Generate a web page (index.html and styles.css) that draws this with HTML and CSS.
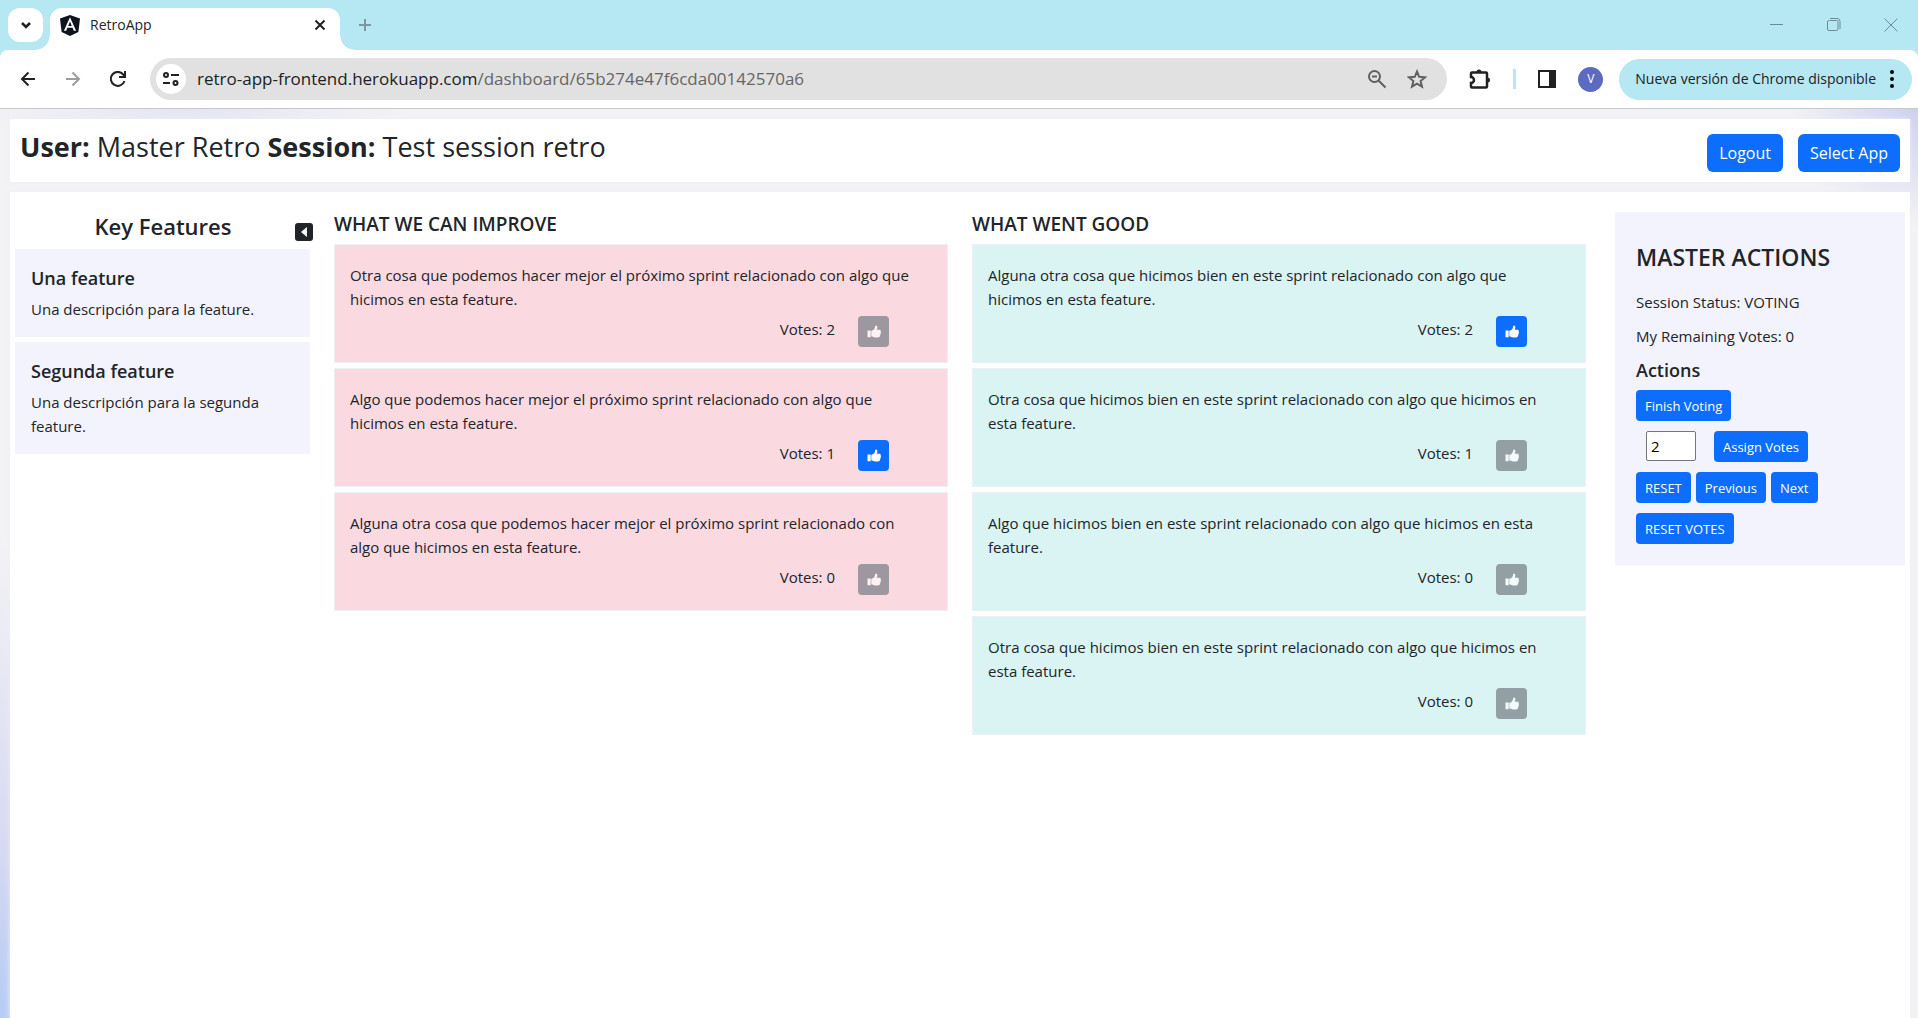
FILE: index.html
```html
<!DOCTYPE html>
<html lang="es">
<head>
<meta charset="utf-8">
<title>RetroApp</title>
<link rel="stylesheet" href="styles.css">
</head>
<body>
<svg class="sprite" aria-hidden="true">
  <symbol id="thumb" viewBox="0 0 14 14"><path d="M.5 5.600h3.200v6.600H.5zM4.300 5.900 7 4.400C7.700 3.800 8 2.400 8.200 1.200 8.400.3 9.900.4 10.200 1.500c.3 1.100 0 2.100-.5 3.300h2.700c1.100 0 1.600.8 1.200 1.700.5.5.5 1.200 0 1.700.2.700 0 1.300-.5 1.700.1 1.400-.6 2.500-2.200 2.500H8.200c-1.500 0-2.500-.8-3.900-1.100z"/></symbol>
</svg>

<header class="browser">
  <div class="tabstrip">
    <button class="tab-search" aria-label="Buscar pestañas"><svg width="14" height="14" viewBox="0 0 14 14"><path d="m3 5 4 4 4-4" class="line bold"/></svg></button>
    <div class="tab">
      <svg width="20" height="21" viewBox="0 0 20 21"><path d="M10 0 20 3.500 18.400 17 10 21 1.600 17 0 3.500z" fill="#10131f"/><path d="M10 2.300 3.900 15.800h2.300l1.200-3h5.200l1.200 3h2.300zm1.800 8.600H8.200L10 6.600z" fill="#fff"/></svg>
      <span class="tab-title">RetroApp</span>
      <button class="plain" aria-label="Cerrar"><svg width="12" height="12" viewBox="0 0 12 12"><path d="m1.500 1.500 9 9m0-9-9 9" class="line"/></svg></button>
    </div>
    <button class="plain new-tab" aria-label="Nueva pestaña"><svg width="14" height="14" viewBox="0 0 14 14"><path d="M7 1v12M1 7h12" class="line muted"/></svg></button>
    <div class="window-controls">
      <button class="plain" aria-label="Minimizar"><svg width="14" height="14" viewBox="0 0 14 14"><path d="M0 6.500h13" class="line thin"/></svg></button>
      <button class="plain" aria-label="Restaurar"><svg width="14" height="14" viewBox="0 0 14 14"><path d="M2.500 2.500h7a1.500 1.500 0 0 1 1.500 1.500v7a1.500 1.500 0 0 1-1.500 1.500H2A1.500 1.500 0 0 1 .5 11V4A1.500 1.500 0 0 1 2 2.500M3 .5h7A3 3 0 0 1 13 3.500V11" class="line thin"/></svg></button>
      <button class="plain" aria-label="Cerrar ventana"><svg width="14" height="14" viewBox="0 0 14 14"><path d="m.5.5 13 13m0-13-13 13" class="line thin"/></svg></button>
    </div>
  </div>
  <div class="toolbar">
    <div class="nav">
      <button class="plain" aria-label="Atrás"><svg width="16" height="16" viewBox="0 0 16 16"><path d="M15 8H2m6.500-6.500L2 8l6.500 6.500" class="line"/></svg></button>
      <button class="plain" aria-label="Adelante"><svg width="16" height="16" viewBox="0 0 16 16"><path d="M1 8h13M7.500 1.500 14 8l-6.500 6.500" class="line faded"/></svg></button>
      <button class="plain" aria-label="Recargar"><svg width="16" height="16" viewBox="0 0 16 16"><path d="M14.500 10A7 7 0 1 1 13.500 3.800L15 5.500M15 0v6H9" class="line"/></svg></button>
    </div>
    <div class="address">
      <button class="site-info" aria-label="Información del sitio"><svg width="16" height="14" viewBox="0 0 16 14"><g class="line"><circle cx="3" cy="3" r="2"/><path d="M8 3h8M0 11h7"/><circle cx="12.500" cy="11" r="2"/></g></svg></button>
      <span class="url">retro-app-frontend.herokuapp.com<span class="path">/dashboard/65b274e47f6cda00142570a6</span></span>
      <button class="plain" aria-label="Zoom"><svg width="20" height="20" viewBox="0 0 20 20"><g class="line grey"><circle cx="7.500" cy="7.500" r="5.500"/><path d="m11.500 11.500 7 7M5 7.500h5"/></g></svg></button>
      <button class="plain" aria-label="Favoritos"><svg width="20" height="20" viewBox="0 0 20 20"><path d="m10 2.500 2.200 5.300 5.800.5-4.400 3.700 1.400 5.600-5-3-5 3L6.400 12 2 8.300l5.800-.5z" class="line grey"/></svg></button>
    </div>
    <div class="extras">
      <button class="plain" aria-label="Extensiones"><svg width="22" height="22" viewBox="0 0 22 22"><path d="M3 4.500h14q1 0 1 1v13q0 1-1 1H3q-1 0-1-1V15a3 3 0 0 0 0-6V5.500q0-1 1-1z" class="line bold"/><path d="M7.500 4a2.500 2.500 0 0 1 5 0zM18.500 9.500a2.500 2.500 0 0 1 0 5z" fill="#202124"/></svg></button>
      <span class="divider"></span>
      <button class="plain" aria-label="Panel lateral"><svg width="18" height="18" viewBox="0 0 18 18"><path d="M1 1h16v16H1z" class="line"/><path d="M11 1h6v16h-6z" fill="#202124"/></svg></button>
      <button class="avatar" aria-label="Perfil">V</button>
    </div>
    <button class="update">Nueva versión de Chrome disponible <svg width="4" height="18" viewBox="0 0 4 18"><circle cx="2" cy="2" r="2"/><circle cx="2" cy="9" r="2"/><circle cx="2" cy="16" r="2"/></svg></button>
  </div>
</header>

<div class="app">
  <div class="card session">
    <h1><b>User:</b> Master Retro <b>Session:</b> Test session retro</h1>
    <div class="session-actions">
      <button class="btn">Logout</button>
      <button class="btn">Select App</button>
    </div>
  </div>

  <main class="card board">
    <aside class="features">
      <div class="features-head">
        <h2>Key Features</h2>
        <button class="collapse" aria-label="Ocultar"><svg width="8" height="10" viewBox="0 0 8 10"><path d="M7 0v10L1 5z" fill="#fff"/></svg></button>
      </div>
      <section class="feature"><h3>Una feature</h3><p>Una descripción para la feature.</p></section>
      <section class="feature"><h3>Segunda feature</h3><p>Una descripción para la segunda feature.</p></section>
    </aside>

    <section class="column improve">
      <h3>WHAT WE CAN IMPROVE</h3>
      <article class="note"><p>Otra cosa que podemos hacer mejor el próximo sprint relacionado con algo que hicimos en esta feature.</p><div class="vote"><span>Votes: 2</span><button class="like" disabled aria-label="Votar"><svg><use href="#thumb"/></svg></button></div></article>
      <article class="note"><p>Algo que podemos hacer mejor el próximo sprint relacionado con algo que hicimos en esta feature.</p><div class="vote"><span>Votes: 1</span><button class="like" aria-label="Votar"><svg><use href="#thumb"/></svg></button></div></article>
      <article class="note"><p>Alguna otra cosa que podemos hacer mejor el próximo sprint relacionado con algo que hicimos en esta feature.</p><div class="vote"><span>Votes: 0</span><button class="like" disabled aria-label="Votar"><svg><use href="#thumb"/></svg></button></div></article>
    </section>

    <section class="column good">
      <h3>WHAT WENT GOOD</h3>
      <article class="note"><p>Alguna otra cosa que hicimos bien en este sprint relacionado con algo que hicimos en esta feature.</p><div class="vote"><span>Votes: 2</span><button class="like" aria-label="Votar"><svg><use href="#thumb"/></svg></button></div></article>
      <article class="note"><p>Otra cosa que hicimos bien en este sprint relacionado con algo que hicimos en esta feature.</p><div class="vote"><span>Votes: 1</span><button class="like" disabled aria-label="Votar"><svg><use href="#thumb"/></svg></button></div></article>
      <article class="note"><p>Algo que hicimos bien en este sprint relacionado con algo que hicimos en esta feature.</p><div class="vote"><span>Votes: 0</span><button class="like" disabled aria-label="Votar"><svg><use href="#thumb"/></svg></button></div></article>
      <article class="note"><p>Otra cosa que hicimos bien en este sprint relacionado con algo que hicimos en esta feature.</p><div class="vote"><span>Votes: 0</span><button class="like" disabled aria-label="Votar"><svg><use href="#thumb"/></svg></button></div></article>
    </section>

    <aside class="master">
      <h2>MASTER ACTIONS</h2>
      <p>Session Status: VOTING</p>
      <p>My Remaining Votes: 0</p>
      <h3>Actions</h3>
      <div class="row"><button class="btn small">Finish Voting</button></div>
      <div class="row assign"><input type="text" value="2" aria-label="Votos"><button class="btn small">Assign Votes</button></div>
      <div class="row"><button class="btn small">RESET</button><button class="btn small">Previous</button><button class="btn small">Next</button></div>
      <div class="row"><button class="btn small">RESET VOTES</button></div>
    </aside>
  </main>
</div>
</body>
</html>
```
FILE: styles.css
```css
* { box-sizing: border-box; }
html { height: 100%; }
body {
  margin: 0;
  min-height: 100%;
  display: flex;
  flex-direction: column;
  font: 15px/24px "Open Sans", "Noto Sans", sans-serif;
  color: #212529;
}
h1, h2, h3, p { margin: 0; }
button, input { font: inherit; color: inherit; }
button { border: 0; padding: 0; display: flex; align-items: center; justify-content: center; white-space: nowrap; }
svg { display: block; flex: none; }
.sprite { position: absolute; width: 0; height: 0; }
.plain { background: none; }

.line { fill: none; stroke: #202124; stroke-width: 2; }
.line.bold { stroke-width: 2.5; }
.line.thin { stroke: #6d8c93; stroke-width: 1; }
.line.muted { stroke: #7d979e; }
.line.faded { stroke: #9c9c9c; }
.line.grey { stroke: #5f6063; }

.tabstrip { display: flex; align-items: flex-start; height: 50px; padding: 8px 8px 0; background: #b5e8f3; }
.tab-search { width: 35px; height: 34px; border-radius: 12px; background: #fff; }
.tab {
  position: relative;
  display: flex;
  align-items: center;
  width: 290px;
  height: 42px;
  margin-left: 7px;
  padding: 0 14px 8px 10px;
  border-radius: 12px 12px 0 0;
  background: #fff;
}
.tab::before, .tab::after { content: ""; position: absolute; bottom: 0; width: 14px; height: 14px; }
.tab::before { right: 100%; background: radial-gradient(circle at 0 0, transparent 13px, #fff 14px); }
.tab::after { left: 100%; background: radial-gradient(circle at 100% 0, transparent 13px, #fff 14px); }
.tab-title { flex: 1; padding-left: 10px; font-size: 14px; }
.new-tab { width: 34px; height: 34px; margin-left: 8px; }
.window-controls { display: flex; gap: 43px; margin-left: auto; padding: 10px 12px 0 0; }

.browser { background: #b5e8f3; }
.toolbar { display: flex; align-items: center; height: 59px; padding: 0 6px 0 20px; background: #fff; border-bottom: 1px solid #c8c8c8; border-radius: 8px 8px 0 0; }
.nav { display: flex; gap: 29px; width: 130px; }
.address { flex: 1; display: flex; align-items: center; gap: 20px; height: 42px; padding: 0 20px 0 6px; border-radius: 21px; background: #e1e1e1; }
.site-info { width: 30px; height: 30px; border-radius: 50%; background: #fff; }
.url { flex: 1; margin-left: -9px; font-size: 17px; color: #202124; }
.path { color: #666; }
.extras { display: flex; align-items: center; gap: 22px; padding: 0 16px 0 22px; }
.divider { width: 3px; height: 20px; background: #b5e8f3; }
.avatar { width: 25px; height: 25px; border-radius: 50%; background: #5c6bc0; color: #fff; font-size: 12px; }
.update { gap: 14px; height: 41px; padding: 0 18px 0 16px; border-radius: 21px; background: #b5e8f3; color: #202124; font-size: 14px; }

.app {
  flex: 1;
  display: flex;
  flex-direction: column;
  gap: 10px;
  padding: 10px 8px 0 10px;
  background:
    radial-gradient(ellipse 220px 40px at 190px 0, #e4e5f4, transparent),
    radial-gradient(ellipse 130px 120px at 100% 0, #cdd1f1, transparent),
    radial-gradient(ellipse 60px 480px at 0 100%, #b3cbf5, #d6d9f2 35%, transparent),
    #f3f3f5;
}
.card { background: #fff; box-shadow: 0 0 4px #ececf8; }
.session { display: flex; justify-content: space-between; height: 63px; padding: 8px 10px 0; }
h1 { font-size: 27px; line-height: 40px; font-weight: 400; }
h1 b { font-weight: 700; }
.session-actions { display: flex; gap: 15px; padding-top: 7px; }
.btn { height: 38px; padding: 0 12px; border-radius: 6px; background: #0d6efd; color: #fff; font-size: 16px; }
.btn.small { height: 31px; padding: 0 9px; border-radius: 4px; font-size: 13px; }

.board {
  flex: 1;
  display: grid;
  grid-template-columns: 295px 1fr 1fr 295px;
  column-gap: 24px;
  align-items: start;
  padding: 20px 5px 0;
}
h2 { font-size: 22px; line-height: 29px; font-weight: 600; }
h3 { font-size: 18px; line-height: 24px; font-weight: 600; }
.features { display: grid; gap: 5px; }
.features-head { display: grid; grid-template-columns: 1fr 18px; height: 32px; margin-right: -3px; }
.features-head h2 { padding-left: 16px; text-align: center; }
.collapse { width: 18px; height: 18px; margin-top: 11px; border-radius: 3px; background: #212529; }
.feature { padding: 17px 16px 16px; background: #f3f3fd; }
.feature p { margin-top: 7px; }

.column { display: grid; gap: 5px; }
.column h3 { height: 27px; font-size: 19px; }
.note { height: 119px; padding: 18px 24px 0 15px; border: 1px solid #eeeff9; }
.improve .note { background: #fad9e1; }
.good .note { background: #daf3f3; }
.vote { display: flex; justify-content: flex-end; gap: 23px; padding: 5px 34px 0 0; }
.vote span { padding-top: 1px; }
.like { width: 31px; height: 31px; border-radius: 4px; background: #0d6efd; color: #fff; }
.like svg { width: 14px; height: 14px; fill: currentColor; }
.like:disabled { background: #6c757d; opacity: .65; }

.master { margin-left: 5px; padding: 31px 21px 21px; background: #f3f3fd; }
.master p { margin-top: 10px; }
.master h2 { margin-bottom: 18px; font-size: 23px; }
.master h3 { margin: 10px 0 8px; }
.row { display: flex; gap: 5px; }
.row + .row { margin-top: 10px; }
.assign { gap: 18px; padding-left: 10px; }
.assign input { width: 50px; height: 30px; padding: 0 4px; border: 1px solid #767676; border-radius: 2px; background: #fff; color: #000; }
```
